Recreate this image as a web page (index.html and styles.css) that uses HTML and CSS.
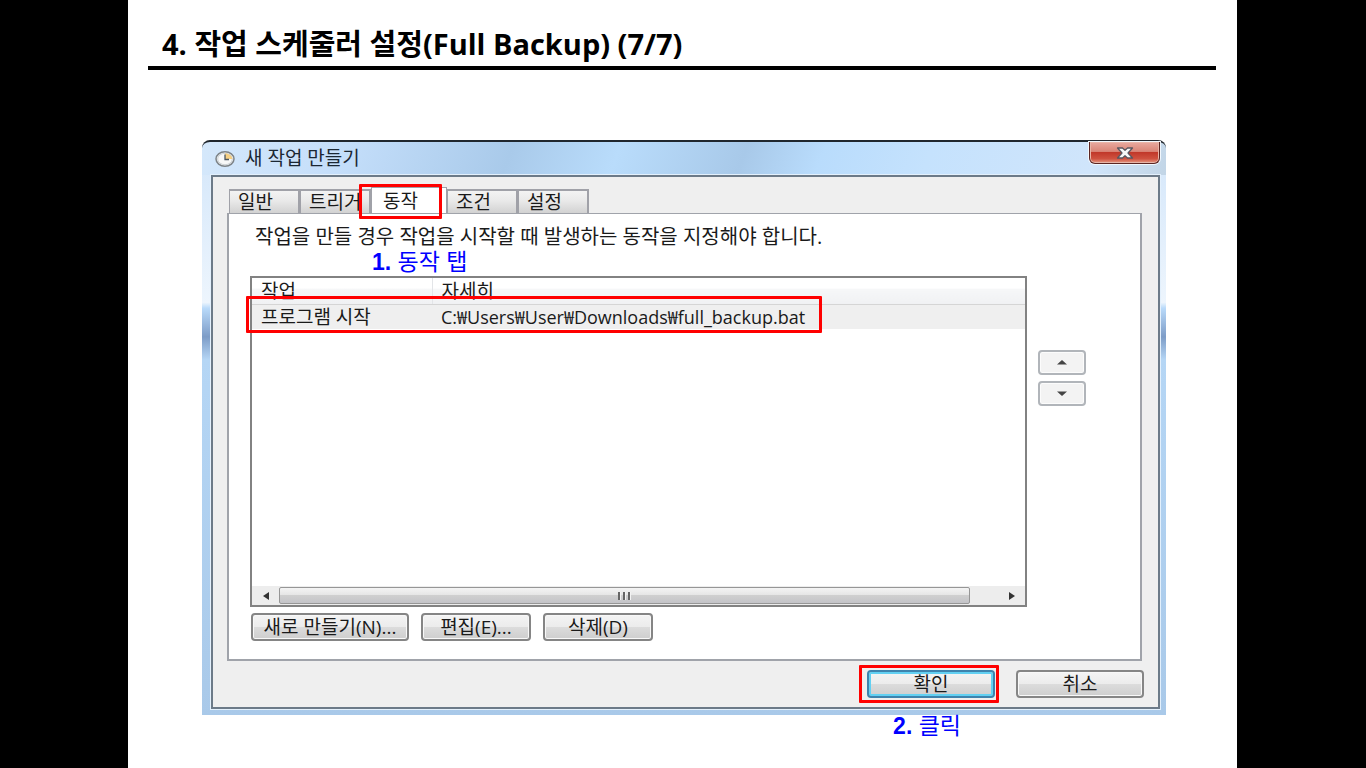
FILE: index.html
```html
<!DOCTYPE html>
<html lang="ko">
<head>
<meta charset="utf-8">
<meta name="viewport" content="width=device-width, initial-scale=1">
<title>작업 스케줄러 설정</title>
<link rel="stylesheet" href="styles.css">
</head>
<body>
<main class="slide">
  <h1 class="slide-title">4. 작업 스케줄러 설정(Full Backup) (7/7)</h1>

  <section class="dialog" aria-labelledby="dialog-title">
    <header class="titlebar">
      <svg class="clock" viewBox="0 0 20 16" aria-hidden="true">
        <ellipse cx="10" cy="8" rx="9" ry="7.2" fill="#eef1f3" stroke="#7d8387" stroke-width="1.5"/>
        <ellipse cx="10" cy="8" rx="7.3" ry="5.7" fill="#f7f8f8" stroke="#c3c9cd" stroke-width=".8"/>
        <path d="M10 8V2.3A7.3 5.7 0 0 1 17.300 8Z" fill="#f5cf83"/>
        <path d="M10 3.500V8.500H14" fill="none" stroke="#4b565f" stroke-width="1.300"/>
      </svg>
      <h2 class="dialog-title" id="dialog-title">새 작업 만들기</h2>
      <button class="close" type="button" aria-label="닫기">
        <svg class="close-mark" viewBox="0 0 18 14" aria-hidden="true">
          <path d="M1.500 2H6.500L9 4.300 11.500 2H16.500L12 7 16.500 12H11.500L9 9.700 6.500 12H1.500L6 7Z" fill="#f8f8f8" stroke="#59565f" stroke-width="1.300" stroke-linejoin="round"/>
        </svg>
      </button>
    </header>

    <div class="client">
      <div class="tabs" role="tablist">
        <button class="tab" type="button" role="tab">일반</button>
        <button class="tab" type="button" role="tab">트리거</button>
        <button class="tab tab-active" type="button" role="tab" aria-selected="true">동작<span class="mark mark-tab"></span></button>
        <button class="tab" type="button" role="tab">조건</button>
        <button class="tab" type="button" role="tab">설정</button>
      </div>

      <div class="panel" role="tabpanel">
        <p class="hint">작업을 만들 경우 작업을 시작할 때 발생하는 동작을 지정해야 합니다.</p>
        <p class="note note-tab"><b>1.</b> 동작 탭</p>
        <div class="body">
          <div class="list">
            <table class="actions">
              <thead>
                <tr><th class="col-name" scope="col">작업</th><th scope="col">자세히</th></tr>
              </thead>
              <tbody>
                <tr><td>프로그램 시작</td><td class="path">C:₩Users₩User₩Downloads₩full_backup.bat</td></tr>
              </tbody>
            </table>
            <span class="mark mark-row"></span>
            <div class="scrollbar">
              <button class="scroll-arrow" type="button" aria-label="왼쪽으로 스크롤"><svg class="side" viewBox="0 0 6 8"><path d="M6 0V8L0 4Z"/></svg></button>
              <div class="thumb"><i class="grip"></i><i class="grip"></i><i class="grip"></i></div>
              <button class="scroll-arrow scroll-right" type="button" aria-label="오른쪽으로 스크롤"><svg class="side" viewBox="0 0 6 8"><path d="M0 0V8L6 4Z"/></svg></button>
            </div>
          </div>
          <div class="order">
            <button class="step" type="button" aria-label="위로"><svg class="caret" viewBox="0 0 10 5"><path d="M0 4.500 5 0 10 4.500Z"/></svg></button>
            <button class="step step-down" type="button" aria-label="아래로"><svg class="caret" viewBox="0 0 10 5"><path d="M0 .5 5 5 10 .5Z"/></svg></button>
          </div>
        </div>
        <div class="edit-buttons">
          <button class="button button-wide" type="button">새로 만들기(N)...</button>
          <button class="button" type="button">편집(E)...</button>
          <button class="button" type="button">삭제(D)</button>
        </div>
      </div>

      <footer class="footer">
        <button class="button button-large button-default" type="button">확인<span class="mark mark-ok"></span></button>
        <button class="button button-large" type="button">취소</button>
      </footer>
      <p class="note note-ok"><b>2.</b> 클릭</p>
    </div>
  </section>
</main>
</body>
</html>
```

FILE: styles.css
```css
* { box-sizing: border-box; }

body {
  margin: 0;
  padding: 0 129px 0 128px;
  background: #000;
  color: #1a1a1a;
  font: 19px/24px "Open Sans", "Noto Sans CJK KR", sans-serif;
}

button {
  margin: 0;
  padding: 0;
  color: inherit;
  font: inherit;
}

.slide {
  min-height: 100vh;
  padding: 24px 21px 0 20px;
  background: #fff;
}

.slide-title {
  margin: 0;
  padding: 0 14px 2px;
  border-bottom: 4px solid #000;
  color: #000;
  font: bold 29px/40px "Open Sans", "Noto Sans CJK KR", sans-serif;
}

.dialog {
  margin: 70px 50px 0 54px;
  padding: 0 6px 6px 9px;
  border-top: 2px solid #20272e;
  border-radius: 8px 8px 0 0;
  background:
    linear-gradient(110deg, #d5e8fb 0, #c4defa 15%, #a9caea 32%, #b9dcfb 43%, #a8c9e9 56%, #b9dcfc 64%, #c5e2fd 75%, #d0e5fb 92%, #c2d5e6 100%) top / 100% 33px no-repeat,
    linear-gradient(#d3e6fa 0, #edf5fd 28%, #b9dafa 29%, #7d9cc7 34%, #b5d6f5 38%, #a9c9e9 100%);
}

.titlebar {
  display: flex;
  align-items: flex-start;
  height: 33px;
}

.clock {
  width: 20px;
  height: 16px;
  margin: 9px 10px 0 4px;
}

.dialog-title {
  flex: 1;
  margin: 4px 0 0;
  color: #1b2733;
  font-size: 19px;
  font-weight: 400;
  line-height: 24px;
}

.close {
  display: grid;
  place-items: center;
  width: 71px;
  height: 22px;
  border: 1px solid #5b2522;
  border-top: 0;
  border-radius: 0 0 6px 6px;
  background: linear-gradient(#e9aaa0 0, #d98577 45%, #c1382a 50%, #cf5240 80%, #e59b85 100%);
  box-shadow: 0 0 0 1px #f1f7fd, inset 0 0 0 1px #e8b5a8;
}

.close-mark {
  width: 18px;
  height: 14px;
}

.client {
  position: relative;
  padding: 10px 16px 9px 14px;
  border: 2px solid #6c7a88;
  background: #efefef;
  box-shadow: 0 0 0 1px #e3f0fc;
}

.tabs {
  display: flex;
  align-items: flex-end;
  padding-left: 2px;
}

.tab {
  width: 71px;
  height: 24px;
  padding: 0 8px;
  border: 2px solid #a0a1a8;
  border-width: 2px 2px 0 1px;
  background: linear-gradient(#f3f3f3 0, #e9e9e9 45%, #d2d2d2 100%);
  line-height: 22px;
  text-align: left;
  white-space: nowrap;
}

.tab-active {
  position: relative;
  width: 76px;
  height: 26px;
  padding: 0 11px;
  border-width: 1px 1px 0;
  background: #fff;
}

.panel {
  position: relative;
  padding: 12px 112px 18px 21px;
  border: 2px solid #a0a3aa;
  border-width: 1px 2px 2px;
  background: #fff;
}

.hint {
  margin: 0 0 0 5px;
  font-size: 20px;
  line-height: 22px;
  white-space: nowrap;
}

.body {
  display: flex;
  gap: 11px;
  margin: 28px -58px 0 0;
}

.list {
  position: relative;
  display: flex;
  flex: 1;
  flex-direction: column;
  min-height: 331px;
  border: 2px solid #828282;
}

.actions {
  width: 100%;
  border-collapse: collapse;
}

.actions th {
  height: 26px;
  padding: 0 9px;
  border-right: 1px solid #e3e5e8;
  border-bottom: 1px solid #d5d5d5;
  background: linear-gradient(#fff 0, #fff 40%, #f6f7f8 41%, #f0f1f3 100%);
  font-weight: 400;
  line-height: 24px;
  text-align: left;
}

.actions th:last-child { border-right: 0; }

.actions .col-name { width: 180px; }

.actions td {
  height: 24px;
  padding: 0 9px;
  background: #efefef;
  line-height: 24px;
}

.actions .path { font-size: 18px; }

.scrollbar {
  display: flex;
  align-items: center;
  height: 19px;
  margin-top: auto;
  background: #ededed;
}

.scroll-arrow {
  display: grid;
  place-items: center;
  width: 27px;
  height: 19px;
  border: 0;
  background: none;
}

.scroll-right { margin-left: 28px; }

.side {
  width: 6px;
  height: 8px;
  fill: #333;
}

.thumb {
  display: flex;
  flex: 1;
  align-items: center;
  justify-content: center;
  gap: 2px;
  height: 17px;
  border: 1px solid #969696;
  border-radius: 2px;
  background: linear-gradient(#f4f4f4 0, #e6e6e6 45%, #cfcfcf 50%, #c4c4c8 100%);
}

.grip {
  width: 3px;
  height: 8px;
  border-right: 1px solid #f3f3f3;
  background: #666;
}

.order {
  display: flex;
  flex-direction: column;
  gap: 6px;
  padding-top: 74px;
}

.step {
  display: grid;
  place-items: center;
  width: 48px;
  height: 25px;
  border: 2px solid #b1b5ba;
  border-radius: 4px;
  background: #f3f3f3;
  box-shadow: inset 0 0 0 1px #fcfcfc;
}

.caret {
  width: 10px;
  height: 5px;
  fill: #444;
}

.edit-buttons {
  display: flex;
  gap: 12px;
  padding: 6px 0 0 1px;
}

.button {
  position: relative;
  width: 110px;
  height: 28px;
  border: 2px solid #858585;
  border-radius: 4px;
  background: linear-gradient(#f4f4f4 0, #ececec 48%, #dcdcdc 50%, #cecece 100%);
  box-shadow: inset 0 0 0 1px #f8f8f8;
  line-height: 24px;
  white-space: nowrap;
}

.button-wide { width: 158px; }

.button-large { width: 128px; }

.button-default {
  border-color: #3e83ad;
  box-shadow: inset 0 0 0 2px #62d0f2;
}

.footer {
  display: flex;
  gap: 21px;
  justify-content: flex-end;
  margin-right: -2px;
  padding-top: 9px;
}

/* Red frames and blue notes that lie over the dialog */
.mark {
  position: absolute;
  z-index: 2;
  border: 3px solid #f00;
  border-radius: 1px;
  pointer-events: none;
}

.mark-tab { inset: -4px 4px -6px -13px; }

.mark-row {
  top: 18px;
  left: -6px;
  width: 576px;
  height: 37px;
}

.mark-ok { inset: -7px -6px -7px -10px; }

.note {
  position: absolute;
  margin: 0;
  color: #00f;
  font: 23px/24px "Liberation Sans", "Noto Sans CJK KR", sans-serif;
  white-space: nowrap;
}

.note-tab {
  top: 36px;
  left: 143px;
}

.note-ok {
  right: 197px;
  bottom: -31px;
}
```
